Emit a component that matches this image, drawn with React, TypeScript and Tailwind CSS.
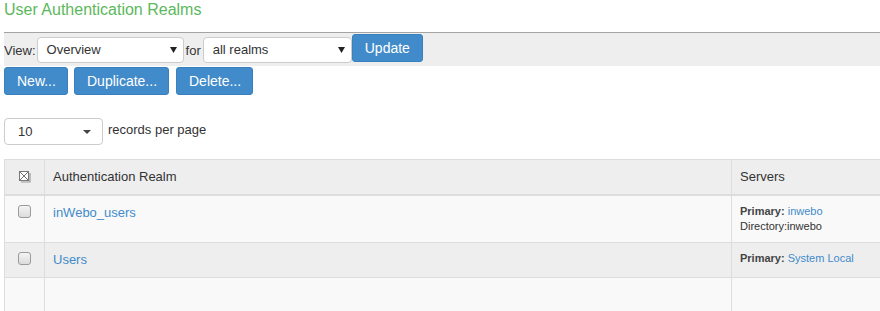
import React from "react";

type Realm = {
  name: string;
  primary: string;
  directory?: string;
};

const realms: Realm[] = [
  { name: "inWebo_users", primary: "inwebo", directory: "inwebo" },
  { name: "Users", primary: "System Local" },
];

function Arrow() {
  return (
    <svg width="7" height="6" viewBox="0 0 7 6" className="shrink-0">
      <path d="M0 0 H7 L3.5 6 Z" fill="#222" />
    </svg>
  );
}

function Caret() {
  return (
    <svg width="8" height="4" viewBox="0 0 8 4" className="shrink-0">
      <path d="M0 0 H8 L4 4 Z" fill="#444" />
    </svg>
  );
}

function SelectBox({ value, width }: { value: string; width: string }) {
  return (
    <div
      className={`${width} flex h-[26px] items-center justify-between rounded-[4px] border border-[#ccc] bg-white pl-[9px] pr-[6px] text-[13px] text-[#333]`}
    >
      <span>{value}</span>
      <Arrow />
    </div>
  );
}

function Button({ children, className = "" }: { children: React.ReactNode; className?: string }) {
  return (
    <button
      type="button"
      className={`h-[28px] rounded-[3px] border border-[#3a80be] bg-[#428bca] px-3 text-[14px] leading-none text-white ${className}`}
    >
      {children}
    </button>
  );
}

function Checkbox() {
  return (
    <span className="mx-auto mt-[1px] block h-[13px] w-[13px] rounded-[3px] border border-[#9a9a9a] bg-gradient-to-b from-[#f4f4f4] to-[#dcdcdc]" />
  );
}

function SelectAllIcon() {
  return (
    <svg width="14" height="14" viewBox="0 0 14 14" className="mx-auto block">
      <rect x="1.5" y="1.5" width="9" height="9" fill="#fff" stroke="#777" />
      <path d="M2 2 L10 10 M10 2 L2 10" stroke="#777" strokeWidth="1" />
      <path d="M12 3 V12 H3" fill="none" stroke="#999" strokeWidth="1.2" />
    </svg>
  );
}

export default function App() {
  return (
    <div className="h-[311px] w-[880px] overflow-hidden bg-white font-['Liberation_Sans',Arial,sans-serif] text-[13px] text-[#333]">
      <h1 className="px-1 pt-[1px] text-[16px] leading-[18px] text-[#5cb85c]">User Authentication Realms</h1>

      <div className="ml-1 mt-[13px] flex h-[34px] items-start border-t border-[#a4a4a4] bg-[#eeeeee]">
        <span className="mt-[8px] text-[13px]">View:</span>
        <div className="ml-[1px] mt-[4px]">
          <SelectBox value="Overview" width="w-[147px]" />
        </div>
        <span className="ml-[2px] mt-[8px]">for</span>
        <div className="ml-[2px] mt-[4px]">
          <SelectBox value="all realms" width="w-[149px]" />
        </div>
        <Button className="mt-[1px] h-[27px] px-[12px]">Update</Button>
      </div>

      <div className="ml-1 mt-[1px] flex gap-[6px]">
        <Button className="w-[64px]">New...</Button>
        <Button className="w-[95px]">Duplicate...</Button>
        <Button className="ml-[1px] w-[77px]">Delete...</Button>
      </div>

      <div className="ml-1 mt-[23px] flex items-center gap-[5px]">
        <div className="flex h-[27px] w-[99px] items-center justify-between rounded-[4px] border border-[#ccc] bg-white pl-[13px] pr-[11px]">
          <span>10</span>
          <Caret />
        </div>
        <span className="-mt-[3px]">records per page</span>
      </div>

      <table className="ml-1 mt-[14px] w-[920px] border-collapse">
        <thead>
          <tr className="bg-[#eeeeee]">
            <th className="h-[35px] w-[40px] border border-b-2 border-[#dddddd] align-middle font-normal">
              <SelectAllIcon />
            </th>
            <th className="w-[687px] border border-b-2 border-[#dddddd] px-2 text-left font-normal">Authentication Realm</th>
            <th className="border border-b-2 border-[#dddddd] px-2 text-left font-normal">Servers</th>
          </tr>
        </thead>
        <tbody>
          {realms.map((r, i) => (
            <tr key={r.name} className={i % 2 === 0 ? "bg-[#f9f9f9]" : "bg-[#eeeeee]"}>
              <td className="border border-[#dddddd] pt-[8px] align-top">
                <Checkbox />
              </td>
              <td className="border border-[#dddddd] px-2 pt-[7px] pb-[7px] align-top leading-[20px]">
                <a className="text-[#428bca]">{r.name}</a>
              </td>
              <td className="border border-[#dddddd] px-2 pt-[8px] pb-[8px] align-top text-[11px] leading-[15px]">
                <div>
                  <span className="font-bold text-[#444]">Primary: </span>
                  <a className="text-[#428bca]">{r.primary}</a>
                </div>
                {r.directory && <div>Directory:{r.directory}</div>}
              </td>
            </tr>
          ))}
          <tr className="bg-[#f9f9f9]">
            <td className="h-[40px] border border-[#dddddd]" />
            <td className="border border-[#dddddd]" />
            <td className="border border-[#dddddd]" />
          </tr>
        </tbody>
      </table>
    </div>
  );
}
